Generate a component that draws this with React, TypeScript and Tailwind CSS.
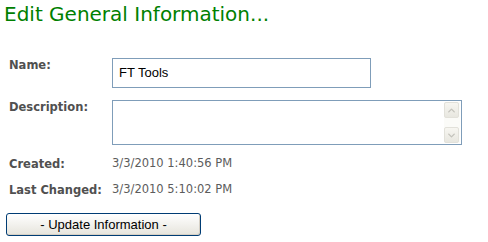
import { ChevronDown, ChevronUp } from "lucide-react";

const labelCls = "pt-[1px] text-[11.5px] leading-[13px] font-bold text-[#505050]";
const valueCls = "text-[11.5px] leading-[13px] text-[#5c5c5c]";

function ScrollButton({ up }: { up?: boolean }) {
  return (
    <div className="flex h-[16px] w-[15px] items-center justify-center rounded-[2px] border border-[#e2e1da] bg-gradient-to-b from-[#f7f6f1] to-[#e8e7e0]">
      {up ? (
        <ChevronUp className="size-[11px] text-[#c4c3bc]" strokeWidth={3} />
      ) : (
        <ChevronDown className="size-[11px] text-[#c4c3bc]" strokeWidth={3} />
      )}
    </div>
  );
}

export default function App() {
  return (
    <div className="h-[242px] w-[488px] bg-white font-['DejaVu_Sans',Tahoma,sans-serif]">
      <h1 className="pl-[4px] pt-[2px] text-[20px] leading-[24px] text-[#008000]">
        Edit General Information...
      </h1>

      <div className="mt-[32px] grid grid-cols-[103px_1fr] gap-y-[12px] pl-[9px]">
        <span className={labelCls}>Name:</span>
        <div className="flex h-[30px] w-[259px] items-center border border-[#7f9db9] px-[6px] font-['Liberation_Sans',Arial,sans-serif] text-[13px] text-black">
          FT Tools
        </div>

        <span className={labelCls}>Description:</span>
        <div className="flex h-[45px] w-[350px] justify-end border border-[#7f9db9] bg-white p-[1px]">
          <div className="flex w-[16px] flex-col justify-between bg-[#fbfbf8]">
            <ScrollButton up />
            <ScrollButton />
          </div>
        </div>

        <span className={labelCls}>Created:</span>
        <span className={valueCls}>3/3/2010 1:40:56 PM</span>

        <span className={labelCls}>Last Changed:</span>
        <span className={valueCls}>3/3/2010 5:10:02 PM</span>
      </div>

      <button className="ml-[6px] mt-[16px] flex h-[23px] w-[195px] items-center justify-center rounded-[3px] border border-[#003c74] bg-gradient-to-b from-white to-[#e6e4dc] font-['Liberation_Sans',Arial,sans-serif] text-[13px] text-black shadow-[inset_-1px_-1px_0_#d6d0c5]">
        - Update Information -
      </button>
    </div>
  );
}
